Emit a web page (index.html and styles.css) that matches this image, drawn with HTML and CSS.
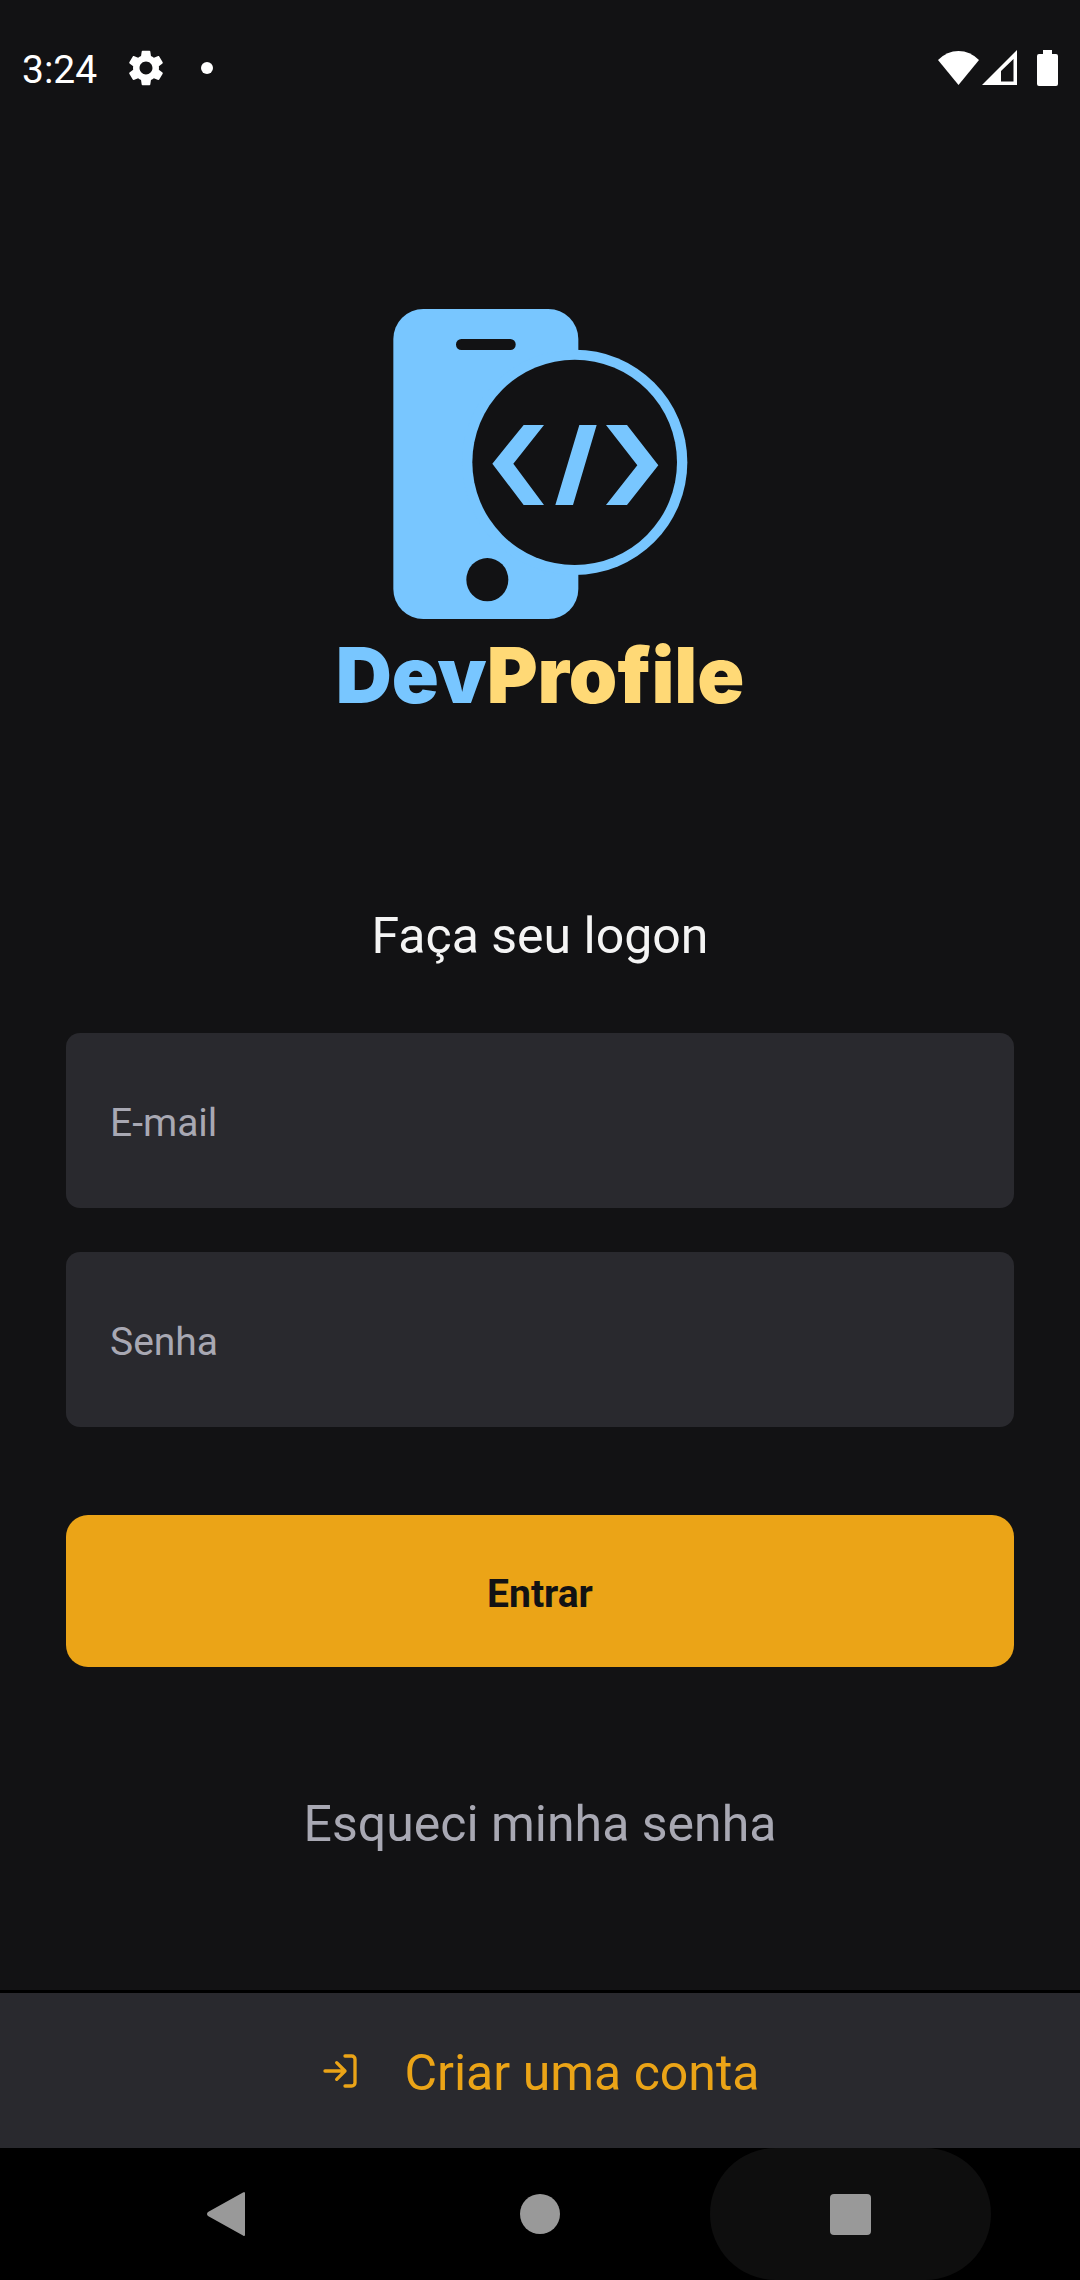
FILE: index.html
```html
<!DOCTYPE html>
<html lang="pt-BR">
<head>
<meta charset="utf-8">
<meta name="viewport" content="width=device-width, initial-scale=1">
<title>DevProfile</title>
<link rel="stylesheet" href="styles.css">
</head>
<body>
<div class="screen">
  <header class="status-bar">
    <div class="status-left">
      <time class="clock">3:24</time>
      <svg class="gear" viewBox="2 2 20 20" aria-hidden="true"><path fill="currentColor" d="M19.14 12.94c.04-.3.06-.61.06-.94 0-.32-.02-.64-.07-.94l2.03-1.58c.18-.14.23-.41.12-.61l-1.92-3.32c-.12-.22-.37-.29-.59-.22l-2.39.96c-.5-.38-1.03-.7-1.62-.94l-.36-2.54c-.04-.24-.24-.41-.48-.41h-3.84c-.24 0-.43.17-.47.41l-.36 2.54c-.59.24-1.13.57-1.62.94l-2.39-.96c-.22-.08-.47 0-.59.22L2.74 8.87c-.12.21-.08.47.12.61l2.03 1.58c-.05.3-.09.63-.09.94s.02.64.07.94l-2.03 1.58c-.18.14-.23.41-.12.61l1.92 3.32c.12.22.37.29.59.22l2.39-.96c.5.38 1.03.7 1.62.94l.36 2.54c.05.24.24.41.48.41h3.84c.24 0 .44-.17.47-.41l.36-2.54c.59-.24 1.13-.56 1.62-.94l2.39.96c.22.08.47 0 .59-.22l1.92-3.32c.12-.22.07-.47-.12-.61l-2.01-1.58zM12 15.6c-1.980 0-3.600-1.620-3.600-3.600s1.620-3.600 3.600-3.600 3.600 1.620 3.600 3.600-1.620 3.600-3.600 3.600z"/></svg>
      <span class="dot"></span>
    </div>
    <div class="status-right">
      <svg class="wifi" viewBox="0 0 41 35" aria-hidden="true"><path fill="currentColor" d="M0 10Q9 1 20.500 1T41 10L20.500 35Z"/></svg>
      <svg class="signal" viewBox="0 0 35 35" aria-hidden="true"><path fill="currentColor" fill-rule="evenodd" d="M35 0V35H0ZM31.500 9L19 21V31.500H31.500Z"/></svg>
      <svg class="battery" viewBox="0 0 21 36" aria-hidden="true"><path fill="currentColor" d="M6 0H15V4H19Q21 4 21 6V34Q21 36 19 36H2Q0 36 0 34V6Q0 4 2 4H6Z"/></svg>
    </div>
  </header>

  <main class="content">
    <svg class="logo" viewBox="53 57 1215 1188" role="img" aria-label="DevProfile">
      <rect class="logo-blue" x="219" y="57" width="555" height="930" rx="90"/>
      <circle class="logo-blue" cx="763" cy="517" r="338"/>
      <ellipse class="logo-dark" cx="763" cy="517" rx="307" ry="308"/>
      <rect class="logo-dark" x="407" y="147" width="179" height="33" rx="16"/>
      <ellipse class="logo-dark" cx="501" cy="869" rx="63" ry="65"/>
      <path class="logo-blue" d="M610 405H671L579 521L671 645H610L516 521ZM777 405H829L758 645H705ZM857 405H920L1014 526L920 645H857L951 526Z"/>
      <text class="wordmark" x="46" y="1239"><tspan class="logo-blue">Dev</tspan><tspan class="logo-gold">Profile</tspan></text>
    </svg>

    <h1 class="title">Faça seu logon</h1>

    <form class="form">
      <input class="field" type="email" placeholder="E-mail" aria-label="E-mail">
      <input class="field" type="password" placeholder="Senha" aria-label="Senha">
      <button class="submit" type="submit">Entrar</button>
    </form>

    <a class="forgot" href="#senha">Esqueci minha senha</a>
  </main>

  <a class="create" href="#conta">
    <svg class="login-icon" viewBox="0 0 24 24" aria-hidden="true"><path d="M15 3h4a2 2 0 0 1 2 2v14a2 2 0 0 1-2 2h-4M10 17l5-5-5-5M15 12H3"/></svg>
    <span class="create-label">Criar uma conta</span>
  </a>

  <nav class="system-nav">
    <button class="nav-button" type="button" aria-label="Voltar"><svg class="nav-icon" viewBox="0 0 50 50" aria-hidden="true"><path d="M40 4.500V45.500Q40 48 38 46.500L3 27Q1 25 3 23L38 3.500Q40 2 40 4.500Z"/></svg></button>
    <button class="nav-button" type="button" aria-label="Início"><svg class="nav-icon" viewBox="0 0 50 50" aria-hidden="true"><circle cx="25" cy="25" r="20"/></svg></button>
    <button class="nav-button pressed" type="button" aria-label="Recentes"><svg class="nav-icon" viewBox="0 0 50 50" aria-hidden="true"><rect x="5" y="5" width="41" height="41" rx="4"/></svg></button>
  </nav>
</div>
</body>
</html>
```
FILE: styles.css
```css
* {
  box-sizing: border-box;
}

body {
  margin: 0;
  background: #121214;
  color: #f4f4f4;
  font-family: Roboto, sans-serif;
}

.screen {
  display: flex;
  flex-direction: column;
  min-height: 100vh;
}

.status-bar,
.status-left,
.status-right {
  display: flex;
  align-items: center;
}

.status-bar {
  justify-content: space-between;
  height: 135px;
  padding: 0 22px;
  color: #fff;
}

.clock {
  padding-top: 4px;
  font-size: 39px;
  line-height: 48px;
}

.gear {
  width: 36px;
  height: 36px;
  margin-left: 31px;
}

.dot {
  width: 12px;
  height: 12px;
  margin-left: 37px;
  border-radius: 50%;
  background: currentColor;
}

.wifi {
  width: 41px;
  height: 35px;
}

.signal {
  width: 35px;
  height: 35px;
  margin-left: 3px;
}

.battery {
  width: 21px;
  height: 36px;
  margin-left: 20px;
}

.content {
  display: flex;
  flex: 1;
  flex-direction: column;
  align-items: center;
  padding: 174px 66px 66px;
}

.logo {
  width: 405px;
  height: 396px;
  overflow: visible;
}

.logo-blue {
  fill: #78c6ff;
}

.logo-gold {
  fill: #ffd976;
}

.logo-dark {
  fill: #121214;
}

.wordmark {
  font-family: Inter, sans-serif;
  font-size: 233px;
  font-weight: 900;
}

.title {
  margin: 201px 0 67px;
  font-size: 50px;
  font-weight: 400;
  line-height: 60px;
}

.form {
  display: flex;
  flex-direction: column;
  gap: 44px;
  width: 100%;
}

.field {
  width: 100%;
  height: 175px;
  padding: 4px 44px 0;
  border: 0;
  border-radius: 14px;
  background: #29292e;
  color: #f4f4f4;
  font: 400 39px Roboto, sans-serif;
}

.field::placeholder {
  color: #a8a8b3;
  opacity: 1;
}

.submit {
  height: 152px;
  margin-top: 44px;
  padding: 6px 0 0;
  border: 0;
  border-radius: 22px;
  background: #eba417;
  color: #121214;
  font: 700 39px Roboto, sans-serif;
}

.forgot {
  margin-top: 127px;
  color: #a8a8b3;
  font-size: 50px;
  line-height: 60px;
  text-decoration: none;
}

.create {
  display: flex;
  align-items: center;
  justify-content: center;
  gap: 44px;
  height: 158px;
  border-top: 3px solid #000;
  background: #29292e;
  color: #eba417;
  font-size: 50px;
  line-height: 60px;
  text-decoration: none;
}

.create-label {
  padding-top: 4px;
}

.login-icon {
  width: 40px;
  height: 40px;
  fill: none;
  stroke: currentColor;
  stroke-width: 2;
  stroke-linecap: round;
  stroke-linejoin: round;
}

.system-nav {
  display: flex;
  justify-content: center;
  gap: 29px;
  height: 132px;
  background: #000;
}

.nav-button {
  display: flex;
  align-items: center;
  justify-content: center;
  width: 281px;
  padding: 0;
  border: 0;
  border-radius: 66px;
  background: none;
}

.pressed {
  background: #0e0e0e;
}

.nav-icon {
  width: 50px;
  height: 50px;
  fill: #999;
}
```
